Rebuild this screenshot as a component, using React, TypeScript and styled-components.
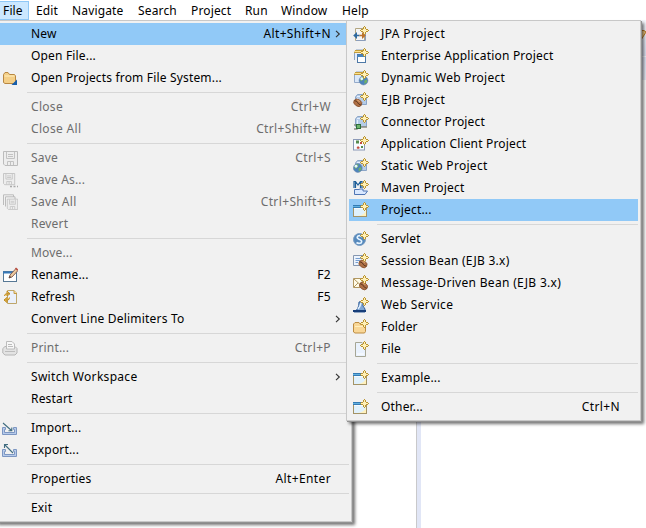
import React from 'react';
import styled, { createGlobalStyle } from 'styled-components';

const GlobalStyle = createGlobalStyle`
  * { box-sizing: border-box; }
  body { margin: 0; background: #fff; overflow: hidden; }
`;

const Window = styled.div`
  position: relative;
  width: 646px;
  height: 528px;
  overflow: hidden;
  background: #fff;
  color: #000;
  font: 12px/22px "Noto Sans", "Open Sans", sans-serif;
  letter-spacing: 0.15px;
  white-space: pre;
`;

const MenuBar = styled.nav`
  display: flex;
  height: 20px;
  padding-top: 1px;
  background: #fff;
`;

const MenuBarItem = styled.div<{ $width: number; $active?: boolean }>`
  width: ${p => p.$width}px;
  height: 19px;
  line-height: 18px;
  padding-left: ${p => (p.$active ? 3 : 6)}px;
  border: 1px solid ${p => (p.$active ? '#90c8f6' : 'transparent')};
  border-left-width: ${p => (p.$active ? 0 : 1)}px;
  background: ${p => (p.$active ? '#cce8ff' : 'transparent')};
`;

const Workbench = styled.main`
  display: flex;
  flex-direction: column;
  height: 508px;
`;

const ToolStrip = styled.div`
  display: flex;
  justify-content: flex-end;
  height: 37px;
  padding-top: 8px;
  background: linear-gradient(#f5f7fc, #dce1f1);
  border-bottom: 1px solid #f5f7fc;
`;

const TabStrip = styled.div`
  height: 23px;
  background: linear-gradient(#dfe4f4, #e9edf8);
`;

const Editors = styled.div`
  display: flex;
  flex: 1;
`;

const Pane = styled.div`
  width: 416px;
`;

const Sash = styled.div`
  width: 5px;
  background: #e1e6f6;
  border-left: 1px solid #c9c9cb;
`;

const Popup = styled.div<{ $sub?: boolean }>`
  position: absolute;
  top: 20px;
  left: ${p => (p.$sub ? 346 : -5)}px;
  width: ${p => (p.$sub ? 295 : 357)}px;
  padding: 2px;
  background: #f1f1f1;
  border: 1px solid #c8c8c8;
  box-shadow: 1px 1px 0 #929292, 3px 3px 3px rgba(0, 0, 0, 0.55);
`;

const MenuRow = styled.div<{ $disabled?: boolean; $selected?: boolean }>`
  display: flex;
  align-items: center;
  height: 22px;
  padding-left: 3px;
  color: ${p => (p.$disabled ? '#6d6d6d' : '#000')};
  background: ${p => (p.$selected ? '#91c9f7' : 'transparent')};
`;

const IconSlot = styled.span<{ $sub?: boolean }>`
  display: flex;
  width: ${p => (p.$sub ? 29 : 30)}px;
  padding-left: 1px;
`;

const Label = styled.span<{ $track?: number }>`
  flex: 1;
  letter-spacing: ${p => p.$track ?? 0.17}px;
`;

const Shortcut = styled.span`
  letter-spacing: 0.37px;
`;

const ArrowSlot = styled.span`
  display: flex;
  justify-content: center;
  width: 18px;
  padding-right: 5px;
`;

const Separator = styled.div<{ $sub?: boolean }>`
  height: 1px;
  margin: 3px 0 3px ${p => (p.$sub ? 28 : 29)}px;
  background: #d7d7d7;
`;

const Svg = styled.svg`
  display: block;
  width: 16px;
  height: 16px;
  flex: none;
`;

type IconName =
  | 'import-projects' | 'save' | 'save-as' | 'save-all' | 'rename' | 'refresh' | 'print' | 'import' | 'export'
  | 'jpa' | 'enterprise' | 'dynamic' | 'ejb' | 'connector' | 'client' | 'static' | 'maven' | 'wizard'
  | 'servlet' | 'session' | 'message' | 'service' | 'folder' | 'file';

const Sparkle = () => (
  <g shapeRendering="crispEdges">
    <path d="M11 0h1v1h1v2h2v1h1v1h-1v1h-2v2h-1v1h-1v-1h-1v-2h-2v-1h-1v-1h1v-1h2v-2h1Z" fill="#bb942f" />
    <path d="M11 1h1v2h1v1h2v1h-2v1h-1v2h-1v-2h-1v-1h-2v-1h2v-1h1Z" fill="#fff0b8" />
  </g>
);

const Globe = ({ x, y, r }: { x: number; y: number; r: number }) => (
  <g transform={`translate(${x} ${y}) scale(${r / 5})`}>
    <circle r="5" fill="#4d83bd" stroke="#6c88aa" strokeWidth=".7" />
    <path d="M-4-2Q-2-5 1-4L0-1-3 1ZM1 0 4-1 4 2 1 4Z" fill="#71b264" />
    <circle cx="-2" cy="-2" r="1.6" fill="#e5f4ff" />
  </g>
);

const Bean = ({ x, y }: { x: number; y: number }) => (
  <g transform={`translate(${x} ${y}) rotate(35)`}>
    <ellipse rx="4.3" ry="3.3" fill="#b07046" stroke="#8a5533" strokeWidth=".8" />
    <path d="M-4 0Q-1-1 0 0T4 0" fill="none" stroke="#5e3a20" strokeWidth=".9" />
    <path d="M-2-2H1" stroke="#d9a070" />
  </g>
);

const Jar = () => (
  <>
    <path d="M2.5 5 4.5 2.5H11L13.5 5V12.5H2.5Z" fill="#b5cce8" stroke="#8ba5c7" />
    <path d="M4 4.5H11M4.5 6V12" stroke="#e4efff" />
  </>
);

const Disk = () => (
  <>
    <path d="M1.5 1.5H15.5V15.5H3L1.5 14Z" fill="#ededed" stroke="#bcbcbc" />
    <path d="M4.5 2V8.5H12.5V2M5.5 15V11.5H11.5V15M8.5 12V15M6 4.5H11M6 6.5H11" fill="none" stroke="#c2c2c2" />
  </>
);

const Tray = () => (
  <path d="M.5 7.5H3.5V9.5H2.5V12.5H12.5V9.5H11.5V7.5H14.5V14.5H.5Z" fill="#b7cbea" stroke="#7c96c2" />
);

const glyphs: Record<IconName, React.ReactNode> = {
  'import-projects': (
    <>
      <path d="M1.5 12.5V4.5L3 2.5H6L7.5 4.5H12.5L13.5 6V12L12.5 13.5H3Z" fill="#f4cf88" stroke="#b88742" />
      <path d="M2.5 6H12.5" stroke="#fff0bd" />
      <path d="M15 9.5V15H9.5Z" fill="#175eaa" />
    </>
  ),
  save: <Disk />,
  'save-as': (
    <>
      <g transform="translate(.3 .3) scale(.8)"><Disk /></g>
      <path d="M8 14.5H10M11.5 14.5H13.5M15 14.5H16" stroke="#a9a9a9" strokeWidth="1.5" />
    </>
  ),
  'save-all': (
    <>
      <path d="M1.5 11V.8H11.5V3M3.5 12.5V2.8H13V5" fill="none" stroke="#bcbcbc" />
      <g transform="translate(4.2 4) scale(.74)"><Disk /></g>
    </>
  ),
  rename: (
    <>
      <rect x="1.5" y="4.5" width="13" height="10" fill="#fff" stroke="#577895" />
      <path d="M1 5.5H11" stroke="#3779b9" strokeWidth="2" />
      <path d="M7 11 8 8 14 1.5 16 3.5 10 10Z" fill="#ecca9e" stroke="#876055" />
      <path d="M13.5 1 15.8 3.3" stroke="#bc5146" strokeWidth="1.6" />
      <path d="M7 11 8 9 9 10Z" fill="#333" />
    </>
  ),
  refresh: (
    <>
      <path d="M5.5 1.5H12L14.5 4V14.5H5.5Z" fill="#eaf0fb" stroke="#bea66b" />
      <path d="M12 1.5V4.5H15" fill="#f8de9d" stroke="#c39b49" />
      <path d="M8 4.7H4.5Q2.5 5 2.5 7M5 2.2 8 4.7 5 7ZM2 11H5.5Q7.5 11 7.5 8.5M5 8.5 2 11 5 13.5Z" fill="#ffd567" stroke="#bf8c26" />
    </>
  ),
  print: (
    <>
      <path d="M.8 8.5 3 6.5H13L15 8.5V13L13 15H3L.8 13Z" fill="#e3e3e3" stroke="#b6b6b6" />
      <path d="M4.5 9V1.5H10L12.5 4V9Z" fill="#f7f7f7" stroke="#bcbcbc" />
      <path d="M6 4.5H10M6 6.5H11M3 11.5H13" stroke="#bcbcbc" />
    </>
  ),
  import: (
    <>
      <Tray />
      <path d="M1 3 9.5 10.5M9.8 7.5V10.8H6.5" fill="none" stroke="#416d80" strokeWidth="1.1" />
    </>
  ),
  export: (
    <>
      <Tray />
      <path d="M11 11 3 3M2.5 6V2.5H6" fill="none" stroke="#416d80" strokeWidth="1.1" />
    </>
  ),
  jpa: (
    <>
      <path d="M2.5 2.5H11.5V14.5H2.5Z" fill="#f5f5f5" stroke="#b3a681" />
      <path d="M12.5 7V14.5H3" fill="none" stroke="#8a9dbb" />
      <path d="M.2 9.5 4 6V8.8H6.5V10.2H4V13Z" fill="#2f699f" />
      <path d="M12.8 9.5 9 6V8.8H6.5V10.2H9V13Z" fill="#bd732c" />
      <Sparkle />
    </>
  ),
  enterprise: (
    <>
      <path d="M1.5 12V4L3 2H10" fill="#e5eefc" stroke="#8da5c3" />
      <path d="M2 2.5H10L8 4.5H1" fill="#ffe28b" stroke="#c39d3d" />
      <rect x="4.5" y="6.5" width="8" height="8" fill="#fff" stroke="#4e79a7" />
      <path d="M4 8H13" stroke="#4785c0" strokeWidth="2" />
      <Sparkle />
    </>
  ),
  dynamic: (
    <>
      <path d="M1.5 12.5V4L3 2H10V12.5Z" fill="#dbe8f8" stroke="#94aaca" />
      <path d="M2 2.5H10L8 4.5H1" fill="#ffe28b" stroke="#c39d3d" />
      <Globe x={10.5} y={10.5} r={4.4} />
      <Sparkle />
    </>
  ),
  ejb: <><Jar /><Bean x={4.8} y={10.8} /><Sparkle /></>,
  connector: (
    <>
      <Jar />
      <path d="M1 11H4V15H1M4 13H14" fill="none" stroke="#8c8c82" strokeWidth="1.4" />
      <rect x="3.5" y="10.5" width="4" height="4" fill="#6fb56c" stroke="#2d6e3d" />
      <Sparkle />
    </>
  ),
  client: (
    <>
      <rect x=".5" y="3.5" width="11" height="10.5" fill="#f8fbff" stroke="#8b99b7" />
      <path d="M3 4.5H6V7.5H3ZM8 10H10V12H8Z" fill="#568b50" />
      <path d="M7 6H9V8H7ZM5 10 7 12 5 13 3.5 12Z" fill="#c34a3d" />
      <Sparkle />
    </>
  ),
  static: <><Jar /><Globe x={4.8} y={10} r={4.4} /><Sparkle /></>,
  maven: (
    <>
      <path d="M1 8V1.5H2.5L5 5 7.5 1.5H9V8M2.5 2V8M7.5 2V8" fill="none" stroke="#1e5e98" strokeWidth="1.2" />
      <path d="M1.5 14.5V9.5H6L7 9H10V11H14.5L12 14.5H1.5Z" fill="#d9e8ff" stroke="#4f75b4" />
      <Sparkle />
    </>
  ),
  wizard: (
    <>
      <rect x=".5" y="3.5" width="13" height="11" fill="#f6fbff" stroke="#a49365" />
      <path d="M1 14V7H13V14Z" fill="#e0f1fc" />
      <path d="M0 4.5H11" stroke="#347bb5" strokeWidth="3" />
      <path d="M0 4.5H11" stroke="#62b1de" />
      <path d="M5 14Q12 13 13 8V14Z" fill="#fff1bd" />
      <Sparkle />
    </>
  ),
  servlet: (
    <>
      <circle cx="6.5" cy="8.5" r="6" fill="#5589bd" stroke="#7c9ec2" />
      <path d="M9.3 6Q7.5 4 5 5 3 7 6 8.2 10 9.5 8 12 5.5 13 3.5 11.5" fill="none" stroke="#e6f4ff" strokeWidth="1.7" />
      <Sparkle />
    </>
  ),
  session: (
    <>
      <path d="M.5 2.5H10.5V12.5H.5Z" fill="#edf4fd" stroke="#8597b0" />
      <path d="M2.5 5.5H8M2.5 7.5H7M2.5 9.5H5" stroke="#769ed0" />
      <Bean x={10} y={11} />
      <Sparkle />
    </>
  ),
  message: (
    <>
      <path d="M.5 3.5H12.5V12.5H.5Z" fill="#fffbe7" stroke="#b19761" />
      <path d="M1 4 6.5 9 12 4M1 12 5 8" fill="none" stroke="#b19761" />
      <Bean x={10.5} y={11} />
      <Sparkle />
    </>
  ),
  service: (
    <>
      <path d="M1 14.5Q6 13 6 5L10 4Q9 10 12 12V15H1Z" fill="#7ea6d4" stroke="#315d98" />
      <path d="M0 14H13" stroke="#173e7a" strokeWidth="2" />
      <path d="M5 12Q7 10 8 6" stroke="#e0f0ff" fill="none" strokeWidth="1.5" />
      <Sparkle />
    </>
  ),
  folder: (
    <>
      <path d="M.5 13V5L2 3.5H6L7.5 5.5H12.5V12.5L11.5 14H2Z" fill="#f9d797" stroke="#bd8c42" />
      <path d="M2 7.5H11.5" stroke="#fff0be" />
      <Sparkle />
    </>
  ),
  file: (
    <>
      <path d="M2.5 1.5H9L12.5 6V15.5H2.5Z" fill="#eaf2fd" stroke="#a6a695" />
      <path d="M4 13H11" stroke="#fff" />
      <Sparkle />
    </>
  ),
};

const Icon = ({ name }: { name: IconName }) => <Svg viewBox="0 0 16 16">{glyphs[name]}</Svg>;

const Chevron = () => (
  <svg width="6" height="8" viewBox="0 0 6 8">
    <path d="M1 .8 4.3 4 1 7.2" fill="none" stroke="#333" strokeWidth="1.1" />
  </svg>
);

interface Entry {
  label: string;
  icon?: IconName;
  keys?: string;
  disabled?: boolean;
  selected?: boolean;
  submenu?: boolean;
  track?: number;
}

const fileMenu: Entry[][] = [
  [
    { label: 'New', keys: 'Alt+Shift+N', submenu: true, selected: true },
    { label: 'Open File...' },
    { label: 'Open Projects from File System...', icon: 'import-projects' },
  ],
  [
    { label: 'Close', keys: 'Ctrl+W', disabled: true, track: 0.3 },
    { label: 'Close All', keys: 'Ctrl+Shift+W', disabled: true, track: 0.34 },
  ],
  [
    { label: 'Save', keys: 'Ctrl+S', icon: 'save', disabled: true },
    { label: 'Save As...', icon: 'save-as', disabled: true },
    { label: 'Save All', keys: 'Ctrl+Shift+S', icon: 'save-all', disabled: true, track: 0.3 },
    { label: 'Revert', disabled: true },
  ],
  [
    { label: 'Move...', disabled: true },
    { label: 'Rename...', keys: 'F2', icon: 'rename' },
    { label: 'Refresh', keys: 'F5', icon: 'refresh' },
    { label: 'Convert Line Delimiters To', submenu: true, track: 0.2 },
  ],
  [{ label: 'Print...', keys: 'Ctrl+P', icon: 'print', disabled: true }],
  [{ label: 'Switch Workspace', submenu: true, track: 0.3 }, { label: 'Restart' }],
  [{ label: 'Import...', icon: 'import' }, { label: 'Export...', icon: 'export' }],
  [{ label: 'Properties', keys: 'Alt+Enter', track: 0.22 }],
  [{ label: 'Exit' }],
];

const newMenu: Entry[][] = [
  [
    { label: 'JPA Project', icon: 'jpa', track: 0.38 },
    { label: 'Enterprise Application Project', icon: 'enterprise', track: 0.19 },
    { label: 'Dynamic Web Project', icon: 'dynamic', track: 0.23 },
    { label: 'EJB Project', icon: 'ejb', track: 0.3 },
    { label: 'Connector Project', icon: 'connector' },
    { label: 'Application Client Project', icon: 'client' },
    { label: 'Static Web Project', icon: 'static', track: 0.29 },
    { label: 'Maven Project', icon: 'maven', track: 0.27 },
    { label: 'Project...', icon: 'wizard', selected: true },
  ],
  [
    { label: 'Servlet', icon: 'servlet' },
    { label: 'Session Bean (EJB 3.x)', icon: 'session', track: 0.26 },
    { label: 'Message-Driven Bean (EJB 3.x)', icon: 'message', track: 0.31 },
    { label: 'Web Service', icon: 'service', track: 0.38 },
    { label: 'Folder', icon: 'folder' },
    { label: 'File', icon: 'file' },
  ],
  [{ label: 'Example...', icon: 'wizard' }],
  [{ label: 'Other...', icon: 'wizard', keys: 'Ctrl+N' }],
];

const menuBar = [
  { label: 'File', width: 29, active: true },
  { label: 'Edit', width: 36 },
  { label: 'Navigate', width: 66 },
  { label: 'Search', width: 53 },
  { label: 'Project', width: 54 },
  { label: 'Run', width: 36 },
  { label: 'Window', width: 61 },
  { label: 'Help', width: 44 },
];

const Menu = ({ groups, sub }: { groups: Entry[][]; sub?: boolean }) => (
  <Popup $sub={sub}>
    {groups.map((group, i) => (
      <React.Fragment key={i}>
        {i > 0 && <Separator $sub={sub} />}
        {group.map(e => (
          <MenuRow key={e.label} $disabled={e.disabled} $selected={e.selected}>
            <IconSlot $sub={sub}>{e.icon && <Icon name={e.icon} />}</IconSlot>
            <Label $track={e.track}>{e.label}</Label>
            {e.keys && <Shortcut>{e.keys}</Shortcut>}
            <ArrowSlot>{e.submenu && <Chevron />}</ArrowSlot>
          </MenuRow>
        ))}
      </React.Fragment>
    ))}
  </Popup>
);

export default function App() {
  return (
    <Window>
      <GlobalStyle />
      <MenuBar>
        {menuBar.map(m => (
          <MenuBarItem key={m.label} $width={m.width} $active={m.active}>{m.label}</MenuBarItem>
        ))}
      </MenuBar>
      <Workbench>
        <ToolStrip>
          <svg width="6" height="14" viewBox="0 0 6 14">
            <path d="M0 2.5H4L6 4 1 12H0Z" fill="#f2cc84" stroke="#c07a24" />
          </svg>
        </ToolStrip>
        <TabStrip />
        <Editors>
          <Pane />
          <Sash />
        </Editors>
      </Workbench>
      <Menu groups={fileMenu} />
      <Menu groups={newMenu} sub />
    </Window>
  );
}
